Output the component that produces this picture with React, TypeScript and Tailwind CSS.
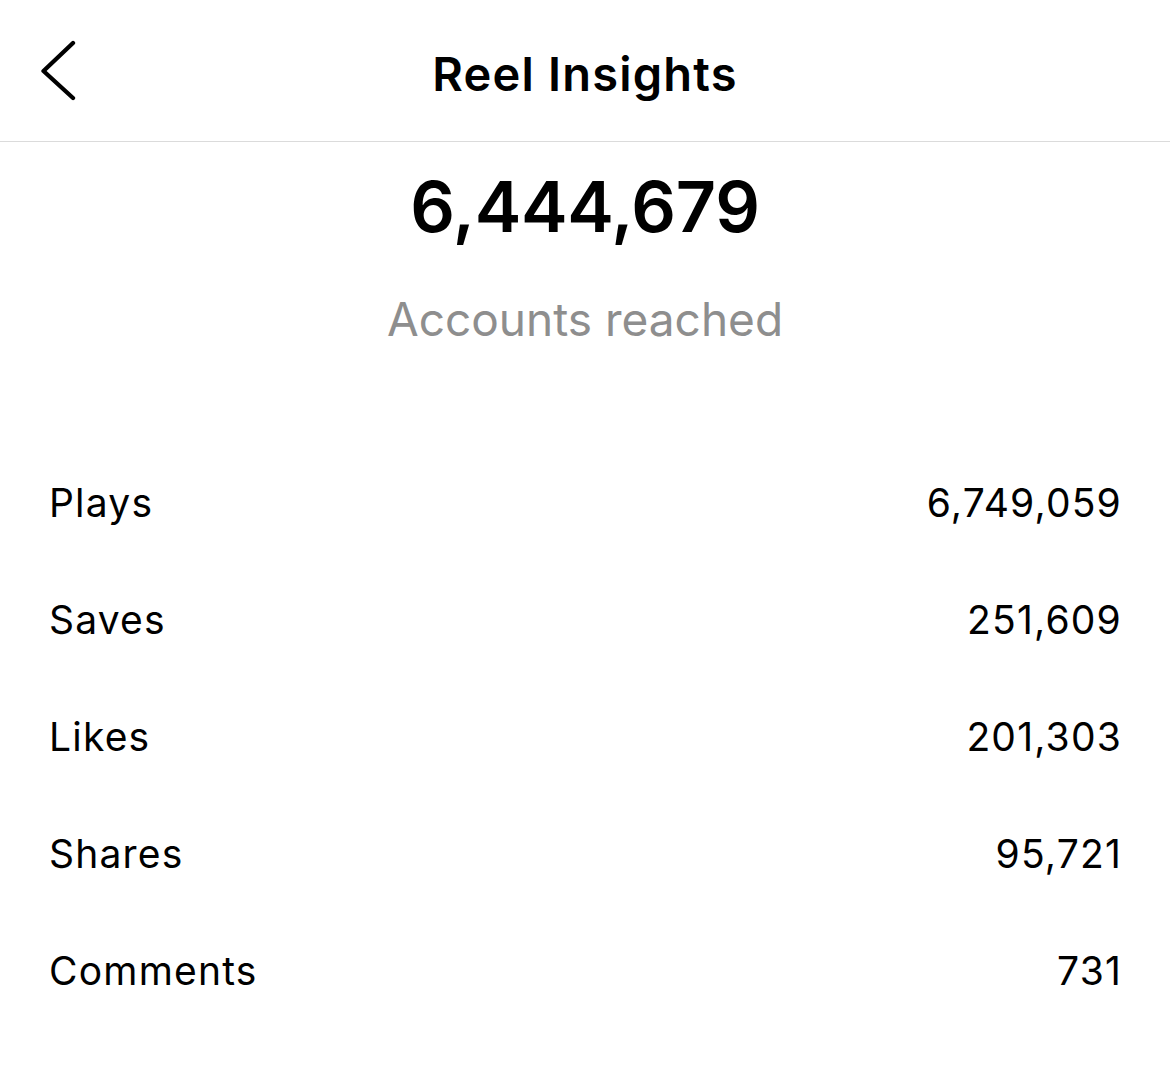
const rows = [
  { label: "Plays", value: "6,749,059" },
  { label: "Saves", value: "251,609" },
  { label: "Likes", value: "201,303" },
  { label: "Shares", value: "95,721" },
  { label: "Comments", value: "731" },
];

const App = () => {
  return (
    <div className="min-h-screen bg-white text-black" style={{ fontFamily: "Inter, 'Noto Sans', sans-serif" }}>
      <div className="relative h-[142px] border-b border-[#dbdbdb] flex items-center justify-center">
        <button className="absolute left-[40px] top-[40px] w-[36px] h-[62px]">
          <svg viewBox="0 0 36 62" className="w-[36px] h-[62px]" fill="none" stroke="#000" strokeWidth="4.3" strokeLinecap="round" strokeLinejoin="round">
            <path d="M33 3 L3.5 31 L33 58" />
          </svg>
        </button>
        <h1 className="text-[47px] font-semibold leading-none pt-[6px] tracking-[1.2px]">Reel Insights</h1>
      </div>

      <div className="flex flex-col items-center">
        <div className="mt-[30px] text-[70px] font-semibold leading-none tracking-[-0.3px]">6,444,679</div>
        <div className="mt-[54px] text-[46px] leading-[46px] text-[#8e8e8e]">Accounts reached</div>
      </div>

      <div className="mt-[103px] pl-[49px] pr-[48px]">
        {rows.map((row) => (
          <div key={row.label} className="h-[117px] flex items-center justify-between text-[39px] tracking-[1.2px]">
            <span>{row.label}</span>
            <span>{row.value}</span>
          </div>
        ))}
      </div>
    </div>
  );
};

export default App;
